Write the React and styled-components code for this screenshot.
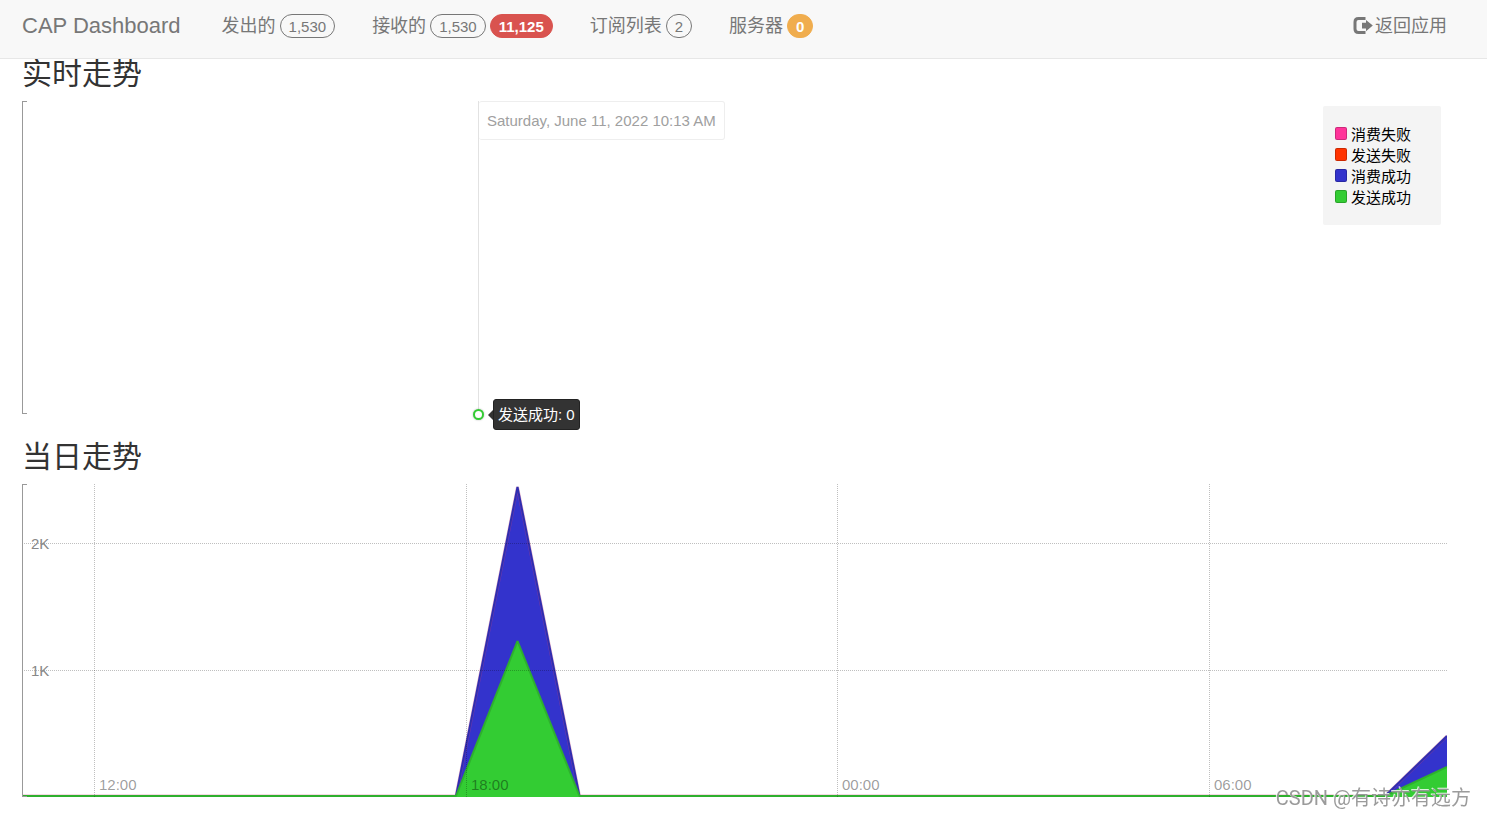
import styled, { createGlobalStyle, css } from "styled-components";

const NAV_ITEMS = [
  { title: "发出的", badges: [{ value: "1,530" }] },
  {
    title: "接收的",
    badges: [{ value: "1,530" }, { value: "11,125", type: "danger" }],
  },
  { title: "订阅列表", badges: [{ value: "2" }] },
  { title: "服务器", badges: [{ value: "0", type: "warning" }] },
];

const SERIES = [
  { name: "消费失败", color: "#ff3399" },
  { name: "发送失败", color: "#ff3300" },
  { name: "消费成功", color: "#3333cc" },
  { name: "发送成功", color: "#33cc33" },
];

// plot area, in svg units
const W = 1425;
const H = 313;

const X_TICKS = [
  { x: 72, label: "12:00" },
  { x: 444, label: "18:00" },
  { x: 815, label: "00:00" },
  { x: 1187, label: "06:00" },
];

const Y_TICKS = [
  { y: 59, label: "2K" },
  { y: 186, label: "1K" },
];

const RECEIVED = "0,312 434,312 495.5,3 557.5,312 1363,312 1425,252";
const PUBLISHED = "0,312 434,312 495.5,157 557.5,312 1363,312 1425,283";

const LogOutIcon = () => (
  <svg width="20" height="18" viewBox="0 0 20 18" aria-hidden="true">
    <path
      d="M12.5 1.5H5.5Q2 1.5 2 5V12Q2 15.5 5.5 15.5H12.5"
      fill="none"
      stroke="currentColor"
      strokeWidth="3"
    />
    <path d="M9 5.8H13V3L19.8 8.6L13 14.2V11.4H9Z" fill="currentColor" />
  </svg>
);

const Navbar = () => (
  <NavbarContainer>
    <NavGroup>
      <Brand href="#">CAP Dashboard</Brand>
      {NAV_ITEMS.map((item) => (
        <NavLink href="#" key={item.title}>
          {item.title}
          {item.badges.map((badge) => (
            <Badge key={badge.value} $type={badge.type}>
              {badge.value}
            </Badge>
          ))}
        </NavLink>
      ))}
    </NavGroup>
    <BackLink href="#">
      <LogOutIcon />
      返回应用
    </BackLink>
  </NavbarContainer>
);

const RealtimeGraph = () => (
  <Graph>
    <YAxis />
    <HoverDetail>
      <HoverDate>Saturday, June 11, 2022 10:13 AM</HoverDate>
      <HoverDot />
      <HoverItem>发送成功: 0</HoverItem>
    </HoverDetail>
    <Legend>
      {SERIES.map((series) => (
        <LegendItem key={series.name}>
          <Swatch $color={series.color} />
          {series.name}
        </LegendItem>
      ))}
    </Legend>
  </Graph>
);

const HistoryGraph = () => (
  <Graph>
    <Plot viewBox={`0 0 ${W} ${H}`} preserveAspectRatio="none">
      <polygon points={`${RECEIVED} ${W},${H} 0,${H}`} fill="#3333cc" />
      <polyline points={RECEIVED} stroke="#cc4477" strokeWidth="3" strokeOpacity="0.4" />
      <polyline points={RECEIVED} stroke="#2e2eb0" strokeWidth="2" />
      <polygon points={`${PUBLISHED} ${W},${H} 0,${H}`} fill="#33cc33" />
      <polyline points={PUBLISHED} stroke="#2eb02e" strokeWidth="2" />
      {Y_TICKS.map(({ y }) => (
        <GridLine key={y} x1="0" x2={W} y1={y + 0.5} y2={y + 0.5} />
      ))}
      {X_TICKS.map(({ x }) => (
        <GridLine key={x} x1={x + 0.5} x2={x + 0.5} y1="0" y2={H} />
      ))}
    </Plot>
    <YAxis />
    {Y_TICKS.map(({ y, label }) => (
      <YLabel key={label} style={{ top: `${(y / H) * 100}%` }}>
        {label}
      </YLabel>
    ))}
    {X_TICKS.map(({ x, label }) => (
      <XLabel key={label} style={{ left: `${(x / W) * 100}%` }}>
        {label}
      </XLabel>
    ))}
  </Graph>
);

const App = () => (
  <>
    <GlobalStyle />
    <Navbar />
    <Main>
      <Heading>实时走势</Heading>
      <RealtimeGraph />
      <Heading>当日走势</Heading>
      <HistoryGraph />
    </Main>
    <Watermark>CSDN @有诗亦有远方</Watermark>
  </>
);

export default App;

const GlobalStyle = createGlobalStyle`
  * {
    box-sizing: border-box;
  }

  body {
    margin: 0;
    background: #fff;
    color: #333;
    font-family: "Liberation Sans", "Noto Sans CJK SC", sans-serif;
    font-size: 15px;
    line-height: 21px;
  }
`;

const NavbarContainer = styled.nav`
  position: fixed;
  top: 0;
  left: 0;
  right: 0;
  z-index: 10;
  display: flex;
  justify-content: space-between;
  height: 59px;
  padding: 0 40px 6px 22px;
  background: #f8f8f8;
  border-bottom: 1px solid #e7e7e7;
`;

const NavGroup = styled.div`
  display: flex;
  align-items: center;
  gap: 37px;
`;

const linkStyle = css`
  display: flex;
  align-items: center;
  color: #777;
  font-size: 18px;
  line-height: 24px;
  text-decoration: none;
  white-space: nowrap;
`;

const Brand = styled.a`
  ${linkStyle}
  padding-right: 4px;
  font-size: 22px;
`;

const NavLink = styled.a`
  ${linkStyle}
  gap: 4px;
`;

const BackLink = styled.a`
  ${linkStyle}
  gap: 2px;
`;

const Badge = styled.span`
  height: 24px;
  padding: 0 8px;
  border: 1px solid #777;
  border-radius: 12px;
  font-size: 15px;
  line-height: 23px;

  ${({ $type }) =>
    $type &&
    css`
      border-color: ${$type === "danger" ? "#d9534f" : "#f0ad4e"};
      background: ${$type === "danger" ? "#d9534f" : "#f0ad4e"};
      color: #fff;
      font-weight: 700;
    `}
`;

const Main = styled.main`
  padding: 31px 40px 20px 22px;
`;

const Heading = styled.h1`
  margin: 0;
  padding: 26px 0 11px;
  font-size: 30px;
  font-weight: 400;
  line-height: 33px;
`;

const Graph = styled.div`
  position: relative;
  height: 313px;
`;

const Plot = styled.svg`
  display: block;
  width: 100%;
  height: 100%;

  polyline {
    fill: none;
    stroke-linejoin: bevel;
  }
`;

const GridLine = styled.line`
  stroke: rgba(0, 0, 0, 0.25);
  stroke-dasharray: 1 1;
`;

/* bracket on the left of each graph */
const YAxis = styled.div`
  position: absolute;
  top: 0;
  bottom: 0;
  left: 0;
  width: 5px;
  border: 1px solid #999;
  border-right: none;
`;

const YLabel = styled.span`
  position: absolute;
  left: 9px;
  color: #888;
  transform: translateY(-50%);
`;

const XLabel = styled.span`
  position: absolute;
  bottom: 2px;
  padding-left: 5px;
  color: rgba(0, 0, 0, 0.4);
`;

const HoverDetail = styled.div`
  position: absolute;
  top: 0;
  bottom: 0;
  left: 32%;
  border-left: 1px solid #e2e2e2;
`;

const HoverDate = styled.div`
  padding: 8px;
  border: 1px solid #eee;
  border-left: none;
  border-radius: 3px;
  color: #a0a0a0;
  white-space: nowrap;
`;

const HoverDot = styled.span`
  position: absolute;
  bottom: -6px;
  left: -6px;
  width: 11px;
  height: 11px;
  border: 2px solid #33cc33;
  border-radius: 50%;
  background: #fff;
  box-shadow: 0 0 2px rgba(0, 0, 0, 0.3);
`;

const HoverItem = styled.div`
  position: absolute;
  bottom: -16px;
  left: 14px;
  padding: 4px;
  border: 1px solid #222;
  border-radius: 3px;
  background: #333;
  color: #fff;
  white-space: nowrap;

  &::before {
    content: "";
    position: absolute;
    top: 10px;
    left: -6px;
    border: 5px solid transparent;
    border-left: none;
    border-right-color: #333;
  }
`;

const Legend = styled.ul`
  position: absolute;
  top: 5px;
  right: 6px;
  width: 118px;
  margin: 0;
  padding: 18px 12px 17px;
  border-radius: 2px;
  background: #f4f4f4;
  color: #000;
  list-style: none;
`;

const LegendItem = styled.li`
  display: flex;
  align-items: center;
  gap: 4px;
`;

const Swatch = styled.span`
  width: 12px;
  height: 13px;
  margin-bottom: 2px;
  border: 1px solid rgba(0, 0, 0, 0.2);
  border-radius: 2px;
  background: ${({ $color }) => $color};
`;

const Watermark = styled.div`
  position: fixed;
  right: 16px;
  bottom: 6px;
  z-index: 20;
  color: rgba(150, 150, 150, 0.95);
  font-family: Roboto, "Noto Sans CJK SC", sans-serif;
  font-size: 20px;
  line-height: 26px;
  text-shadow: -1px -1px 0 rgba(255, 255, 255, 0.8);
`;
